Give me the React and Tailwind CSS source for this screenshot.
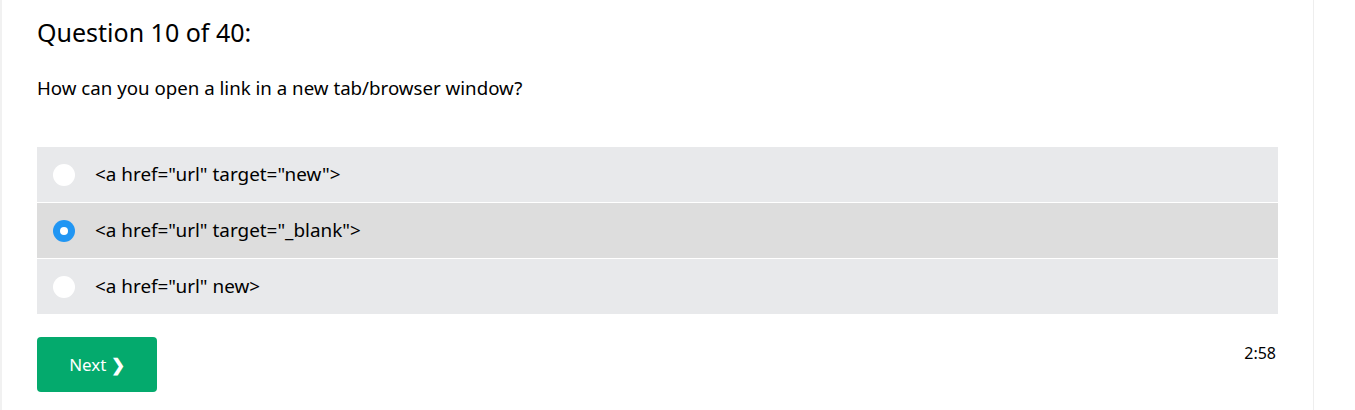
import React, { useState } from "react";

const options = [
  '<a href="url" target="new">',
  '<a href="url" target="_blank">',
  '<a href="url" new>',
];

const App = () => {
  const [picked, setPicked] = useState(1);

  return (
    <div className="flex min-h-[410px] bg-white text-black" style={{ fontFamily: '"Segoe UI", "Noto Sans", "Open Sans", sans-serif' }}>
      <div className="w-[2px] shrink-0 bg-[#f1f1f1]" />
      <main className="w-[1312px] shrink-0 border-r border-[#eeeeee] px-[35px] pt-[15px]">
        <h2 className="text-[25px] leading-[34px]">Question 10 of 40:</h2>
        <p className="mt-[26px] text-[18.7px] leading-[26px]">How can you open a link in a new tab/browser window?</p>

        <div className="mt-[46px] flex flex-col gap-px">
          {options.map((opt, i) => (
            <label
              key={i}
              onClick={() => setPicked(i)}
              className={`flex h-[55px] cursor-pointer items-center pl-[16px] text-[18.9px] ${
                picked === i ? "bg-[#dddddd]" : "bg-[#e8e9eb]"
              }`}
            >
              {picked === i ? (
                <span className="flex h-[22px] w-[22px] items-center justify-center rounded-full bg-[#2196f3]">
                  <span className="h-[8px] w-[8px] rounded-full bg-white" />
                </span>
              ) : (
                <span className="h-[22px] w-[22px] rounded-full bg-white" />
              )}
              <span className="ml-[20px]">{opt}</span>
            </label>
          ))}
        </div>

        <div className="mt-[23px] flex items-start justify-between">
          <button className="h-[55px] w-[120px] rounded-[4px] bg-[#04aa6d] text-[17px] text-white">
            Next <span className="font-bold">❯</span>
          </button>
          <span className="mt-[4px] pr-[2px] text-[16px]">2:58</span>
        </div>
      </main>
    </div>
  );
};

export default App;
